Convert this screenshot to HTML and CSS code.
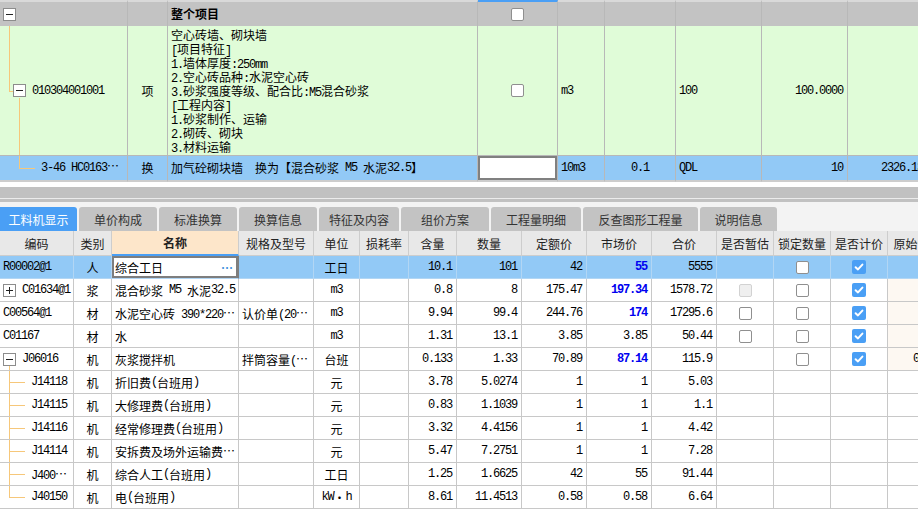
FILE: index.html
```html
<!DOCTYPE html>
<html lang="zh-CN">
<head>
<meta charset="utf-8">
<title>工料机显示</title>
<link rel="stylesheet" href="styles.css">
</head>
<body>
<div class="top">
  <div class="trow gray">
    <div class="tc code"><span class="bx minus"></span></div>
    <div class="tc"></div>
    <div class="tc name b">整个项目</div>
    <div class="tc ctr chk"><span class="cb"></span></div>
    <div class="tc"></div>
    <div class="tc"></div>
    <div class="tc"></div>
    <div class="tc"></div>
    <div class="tc"></div>
  </div>
  <div class="trow green">
    <div class="tc code"><span class="ln g-vup"></span><span class="ln g-hin"></span><span class="ln g-vdown"></span><span class="bx minus"></span><span class="m codetxt">010304001001</span></div>
    <div class="tc ctr">项</div>
    <div class="tc name multi">
      <div>空心砖墙、砌块墙</div>
      <div><span class="m">[</span>项目特征<span class="m">]</span></div>
      <div><span class="m">1.</span>墙体厚度<span class="m">:250mm</span></div>
      <div><span class="m">2.</span>空心砖品种<span class="m">:</span>水泥空心砖</div>
      <div><span class="m">3.</span>砂浆强度等级、配合比<span class="m">:M5</span>混合砂浆</div>
      <div><span class="m">[</span>工程内容<span class="m">]</span></div>
      <div><span class="m">1.</span>砂浆制作、运输</div>
      <div><span class="m">2.</span>砌砖、砌块</div>
      <div><span class="m">3.</span>材料运输</div>
    </div>
    <div class="tc ctr"><span class="cb"></span></div>
    <div class="tc m">m3</div>
    <div class="tc"></div>
    <div class="tc m">100</div>
    <div class="tc num">100.0000</div>
    <div class="tc"></div>
  </div>
  <div class="trow blue">
    <div class="tc code child"><span class="ln b-vup"></span><span class="ln b-h"></span><span class="m">3-46 HC0163⋯</span></div>
    <div class="tc ctr">换</div>
    <div class="tc name">加气砼砌块墙<span class="m">&nbsp;&nbsp;</span>换为【混合砂浆<span class="m">&nbsp;M5&nbsp;</span>水泥<span class="m">32.5</span>】</div>
    <div class="tc editcell"></div>
    <div class="tc m">10m3</div>
    <div class="tc ctr m">0.1</div>
    <div class="tc m">QDL</div>
    <div class="tc num">10</div>
    <div class="tc num">2326.13</div>
  </div>
</div>

<div class="split">
  <div class="sp-white"></div>
  <div class="sp-bar"></div>
  <div class="sp-hl"></div>
  <div class="sp-dl"></div>
</div>

<div class="tabbar">
  <div class="tab on w77">工料机显示</div>
  <div class="tab w78">单价构成</div>
  <div class="tab w78">标准换算</div>
  <div class="tab w78">换算信息</div>
  <div class="tab w80">特征及内容</div>
  <div class="tab w88">组价方案</div>
  <div class="tab w90">工程量明细</div>
  <div class="tab w115">反查图形工程量</div>
  <div class="tab w77">说明信息</div>
</div>

<div class="grid">
  <div class="grow ghead">
    <div class="g ctr">编码</div>
    <div class="g ctr">类别</div>
    <div class="g ctr hname">名称</div>
    <div class="g ctr">规格及型号</div>
    <div class="g ctr">单位</div>
    <div class="g ctr">损耗率</div>
    <div class="g ctr">含量</div>
    <div class="g ctr">数量</div>
    <div class="g ctr">定额价</div>
    <div class="g ctr">市场价</div>
    <div class="g ctr">合价</div>
    <div class="g ctr">是否暂估</div>
    <div class="g ctr">锁定数量</div>
    <div class="g ctr">是否计价</div>
    <div class="g ctr">原始含量</div>
  </div>

  <div class="grow sel">
    <div class="g m">R00002@1</div>
    <div class="g ctr">人</div>
    <div class="g name edit">综合工日<span class="more">⋯</span></div>
    <div class="g"></div>
    <div class="g ctr">工日</div>
    <div class="g"></div>
    <div class="g num">10.1</div>
    <div class="g num">101</div>
    <div class="g num">42</div>
    <div class="g num blue">55</div>
    <div class="g num">5555</div>
    <div class="g"></div>
    <div class="g ctr"><span class="cb"></span></div>
    <div class="g ctr"><span class="cb on"><svg viewBox="0 0 14 14" width="14" height="14"><path d="M3.6 7.2 L6 9.4 L10.4 4.6" fill="none" stroke="#fff" stroke-width="2" stroke-linecap="round" stroke-linejoin="round"/></svg></span></div>
    <div class="g"></div>
  </div>

  <div class="grow">
    <div class="g"><span class="bx plus"></span><span class="m codetxt2">C01634@1</span></div>
    <div class="g ctr">浆</div>
    <div class="g name">混合砂浆<span class="m">&nbsp;M5&nbsp;</span>水泥<span class="m">32.5</span></div>
    <div class="g"></div>
    <div class="g ctr m">m3</div>
    <div class="g"></div>
    <div class="g num">0.8</div>
    <div class="g num">8</div>
    <div class="g num">175.47</div>
    <div class="g num blue">197.34</div>
    <div class="g num">1578.72</div>
    <div class="g ctr"><span class="cb dis"></span></div>
    <div class="g ctr"><span class="cb"></span></div>
    <div class="g ctr"><span class="cb on"><svg viewBox="0 0 14 14" width="14" height="14"><path d="M3.6 7.2 L6 9.4 L10.4 4.6" fill="none" stroke="#fff" stroke-width="2" stroke-linecap="round" stroke-linejoin="round"/></svg></span></div>
    <div class="g peach"></div>
  </div>

  <div class="grow">
    <div class="g m">C00564@1</div>
    <div class="g ctr">材</div>
    <div class="g name">水泥空心砖<span class="m">&nbsp;390*220⋯</span></div>
    <div class="g name">认价单<span class="m">(20⋯</span></div>
    <div class="g ctr m">m3</div>
    <div class="g"></div>
    <div class="g num">9.94</div>
    <div class="g num">99.4</div>
    <div class="g num">244.76</div>
    <div class="g num blue">174</div>
    <div class="g num">17295.6</div>
    <div class="g ctr"><span class="cb"></span></div>
    <div class="g ctr"><span class="cb"></span></div>
    <div class="g ctr"><span class="cb on"><svg viewBox="0 0 14 14" width="14" height="14"><path d="M3.6 7.2 L6 9.4 L10.4 4.6" fill="none" stroke="#fff" stroke-width="2" stroke-linecap="round" stroke-linejoin="round"/></svg></span></div>
    <div class="g peach"></div>
  </div>

  <div class="grow">
    <div class="g m">C01167</div>
    <div class="g ctr">材</div>
    <div class="g name">水</div>
    <div class="g"></div>
    <div class="g ctr m">m3</div>
    <div class="g"></div>
    <div class="g num">1.31</div>
    <div class="g num">13.1</div>
    <div class="g num">3.85</div>
    <div class="g num">3.85</div>
    <div class="g num">50.44</div>
    <div class="g ctr"><span class="cb"></span></div>
    <div class="g ctr"><span class="cb"></span></div>
    <div class="g ctr"><span class="cb on"><svg viewBox="0 0 14 14" width="14" height="14"><path d="M3.6 7.2 L6 9.4 L10.4 4.6" fill="none" stroke="#fff" stroke-width="2" stroke-linecap="round" stroke-linejoin="round"/></svg></span></div>
    <div class="g peach"></div>
  </div>

  <div class="grow">
    <div class="g tstart"><span class="bx minus"></span><span class="m codetxt2">J06016</span></div>
    <div class="g ctr">机</div>
    <div class="g name">灰浆搅拌机</div>
    <div class="g name">拌筒容量<span class="m">(⋯</span></div>
    <div class="g ctr">台班</div>
    <div class="g"></div>
    <div class="g num">0.133</div>
    <div class="g num">1.33</div>
    <div class="g num">70.89</div>
    <div class="g num blue">87.14</div>
    <div class="g num">115.9</div>
    <div class="g"></div>
    <div class="g ctr"><span class="cb"></span></div>
    <div class="g ctr"><span class="cb on"><svg viewBox="0 0 14 14" width="14" height="14"><path d="M3.6 7.2 L6 9.4 L10.4 4.6" fill="none" stroke="#fff" stroke-width="2" stroke-linecap="round" stroke-linejoin="round"/></svg></span></div>
    <div class="g num peach">0.133</div>
  </div>

  <div class="grow">
    <div class="g tnode"><span class="m codetxt3">J14118</span></div>
    <div class="g ctr">机</div>
    <div class="g name">折旧费<span class="m">(</span>台班用<span class="m">)</span></div>
    <div class="g"></div>
    <div class="g ctr">元</div>
    <div class="g"></div>
    <div class="g num">3.78</div>
    <div class="g num">5.0274</div>
    <div class="g num">1</div>
    <div class="g num">1</div>
    <div class="g num">5.03</div>
    <div class="g"></div><div class="g"></div><div class="g"></div><div class="g"></div>
  </div>

  <div class="grow">
    <div class="g tnode"><span class="m codetxt3">J14115</span></div>
    <div class="g ctr">机</div>
    <div class="g name">大修理费<span class="m">(</span>台班用<span class="m">)</span></div>
    <div class="g"></div>
    <div class="g ctr">元</div>
    <div class="g"></div>
    <div class="g num">0.83</div>
    <div class="g num">1.1039</div>
    <div class="g num">1</div>
    <div class="g num">1</div>
    <div class="g num">1.1</div>
    <div class="g"></div><div class="g"></div><div class="g"></div><div class="g"></div>
  </div>

  <div class="grow">
    <div class="g tnode"><span class="m codetxt3">J14116</span></div>
    <div class="g ctr">机</div>
    <div class="g name">经常修理费<span class="m">(</span>台班用<span class="m">)</span></div>
    <div class="g"></div>
    <div class="g ctr">元</div>
    <div class="g"></div>
    <div class="g num">3.32</div>
    <div class="g num">4.4156</div>
    <div class="g num">1</div>
    <div class="g num">1</div>
    <div class="g num">4.42</div>
    <div class="g"></div><div class="g"></div><div class="g"></div><div class="g"></div>
  </div>

  <div class="grow">
    <div class="g tnode"><span class="m codetxt3">J14114</span></div>
    <div class="g ctr">机</div>
    <div class="g name">安拆费及场外运输费<span class="m">⋯</span></div>
    <div class="g"></div>
    <div class="g ctr">元</div>
    <div class="g"></div>
    <div class="g num">5.47</div>
    <div class="g num">7.2751</div>
    <div class="g num">1</div>
    <div class="g num">1</div>
    <div class="g num">7.28</div>
    <div class="g"></div><div class="g"></div><div class="g"></div><div class="g"></div>
  </div>

  <div class="grow">
    <div class="g tnode"><span class="m codetxt3">J400⋯</span></div>
    <div class="g ctr">机</div>
    <div class="g name">综合人工<span class="m">(</span>台班用<span class="m">)</span></div>
    <div class="g"></div>
    <div class="g ctr">工日</div>
    <div class="g"></div>
    <div class="g num">1.25</div>
    <div class="g num">1.6625</div>
    <div class="g num">42</div>
    <div class="g num">55</div>
    <div class="g num">91.44</div>
    <div class="g"></div><div class="g"></div><div class="g"></div><div class="g"></div>
  </div>

  <div class="grow">
    <div class="g tnode tlast"><span class="m codetxt3">J40150</span></div>
    <div class="g ctr">机</div>
    <div class="g name">电<span class="m">(</span>台班用<span class="m">)</span></div>
    <div class="g"></div>
    <div class="g ctr"><span class="m">kW</span>・<span class="m">h</span></div>
    <div class="g"></div>
    <div class="g num">8.61</div>
    <div class="g num">11.4513</div>
    <div class="g num">0.58</div>
    <div class="g num">0.58</div>
    <div class="g num">6.64</div>
    <div class="g"></div><div class="g"></div><div class="g"></div><div class="g"></div>
  </div>
</div>
</body>
</html>
```

FILE: styles.css
```css
* { box-sizing: border-box; }
html, body { margin: 0; padding: 0; }
body {
  width: 918px;
  height: 514px;
  overflow: hidden;
  background: #fff;
  font-family: "Noto Sans CJK SC", sans-serif;
  font-size: 12px;
  color: #000;
}
.m {
  font-family: "Liberation Mono", "Noto Sans CJK SC", monospace;
  letter-spacing: -1.2px;
}
.b { font-weight: bold; }

/* ---------- top (bill of quantities) ---------- */
.trow {
  display: grid;
  grid-template-columns: 128px 40px 310px 80px 47px 71px 86px 86px 80px;
  width: 928px;
}
.tc {
  position: relative;
  display: flex;
  align-items: center;
  padding: 0 3px;
  border-right: 1px solid #b8b8b8;
  white-space: nowrap;
  overflow: hidden;
  line-height: 14px;
}
.tc.ctr { justify-content: center; }
.tc.num {
  justify-content: flex-end;
  font-family: "Liberation Mono", monospace;
  letter-spacing: -1.2px;
  padding-right: 4px;
}
.trow.gray { height: 26px; background: #c3c3c3; }
.trow.gray .tc { border-top: 2px solid #d9d9d9; }
.trow.gray .tc.chk { border-top-color: #4a9ff5; }
.trow.green { height: 130px; background: #e0fcd8; }
.trow.green .tc { border-bottom: 1px solid #b8b8b8; }
.trow.blue { height: 26px; background: #92c9f6; }
.trow.blue .tc { border-bottom: 2px solid #cdcdcd; }

.tc.multi {
  display: block;
  padding-top: 2px;
  white-space: nowrap;
}
.tc.multi > div {
  height: 14px;
  line-height: 14px;
}
.green .code { padding-left: 13px; }
.codetxt { margin-left: 6px; }
.child { padding-left: 41px; }

.editcell {
  background: #fff;
  box-shadow: inset 0 0 0 2px #808080;
}

/* tree lines */
.ln { position: absolute; background: #f6c77a; }
.g-vup { left: 9px; top: 0; width: 1px; height: 50%; }
.g-hin { left: 9px; top: 50%; width: 4px; height: 1px; }
.g-vdown { left: 19px; top: calc(50% + 7px); bottom: -1px; width: 1px; }
.b-vup { left: 19px; top: 0; width: 1px; height: 50%; }
.b-h { left: 19px; top: 50%; width: 16px; height: 1px; }

/* expand boxes */
.bx {
  position: relative;
  flex: none;
  width: 13px;
  height: 13px;
  border: 1px solid #8c8c8c;
  background: #fff;
}
.bx::before {
  content: "";
  position: absolute;
  left: 2px;
  top: 5px;
  width: 7px;
  height: 1px;
  background: #222;
}
.bx.plus::after {
  content: "";
  position: absolute;
  left: 5px;
  top: 2px;
  width: 1px;
  height: 7px;
  background: #222;
}

/* checkboxes */
.cb {
  display: inline-block;
  width: 13px;
  height: 13px;
  border: 1px solid #8f8f8f;
  border-radius: 2px;
  background: #fff;
}
.cb.on {
  width: 14px;
  height: 14px;
  border: none;
  background: #4a9ff5;
}
.cb.on svg { display: block; }
.cb.dis { background: #efefef; border-color: #d2d2d2; }

/* ---------- splitter ---------- */
.sp-white { height: 5px; background: #fff; }
.sp-bar { height: 11px; background: #c1c1c1; }
.sp-hl { height: 1px; background: #ececec; }
.sp-dl { height: 3px; background: #c1c1c1; }

/* ---------- tabs ---------- */
.tabbar {
  height: 29px;
  background: #f3f3f3;
  display: flex;
  align-items: flex-end;
  gap: 2px;
}
.tab {
  flex: none;
  height: 24px;
  background: #c3c3c3;
  border-radius: 3px 3px 0 0;
  display: flex;
  align-items: center;
  justify-content: center;
  color: #333;
  font-size: 12px;
}
.tab.on { background: #4a9ff5; color: #fff; border-radius: 0 3px 0 0; }
.w77 { width: 77px; }
.w78 { width: 78px; }
.w80 { width: 80px; }
.w88 { width: 88px; }
.w90 { width: 90px; }
.w115 { width: 115px; }

/* ---------- resource grid ---------- */
.grow {
  display: grid;
  grid-template-columns: 74px 38px 127px 75px 46px 49px 48px 65px 65px 65px 65px 57px 57px 57px 60px;
  width: 948px;
  height: 23px;
}
.g {
  position: relative;
  display: flex;
  align-items: center;
  padding: 0 3px;
  border-right: 1px solid #c8c8c8;
  border-bottom: 1px solid #c8c8c8;
  white-space: nowrap;
  overflow: hidden;
}
.g.ctr { justify-content: center; }
.g.num {
  justify-content: flex-end;
  font-family: "Liberation Mono", monospace;
  letter-spacing: -1.2px;
  padding-right: 4px;
}
.g.num.blue { color: #0000f0; font-weight: bold; }
.g.peach { background: #fdf8f2; }

.ghead { height: 25px; background: #e8e8e8; color: #222; }
.ghead .g { border-color: #cdcdcd; }
.ghead .hname {
  background: #fde6ca;
  font-weight: bold;
  border-bottom: 2px solid #4a9ff5;
}

.grow.sel { background: #92c9f6; }
.grow.sel .g { border-color: #b2d6f4; }
.grow.sel .edit {
  background: #fff;
  box-shadow: inset 0 0 0 2px #7e7e7e;
  border-right-color: #7e7e7e;
}
.more {
  margin-left: auto;
  color: #3f8fdc;
  font-weight: bold;
  padding-right: 2px;
}

.codetxt2 { margin-left: 6px; }
.codetxt3 { margin-left: 28px; }

.tstart::before {
  content: "";
  position: absolute;
  left: 9px;
  top: calc(50% + 7px);
  bottom: -1px;
  width: 1px;
  background: #f6c77a;
}
.tnode::before {
  content: "";
  position: absolute;
  left: 9px;
  top: 0;
  bottom: -1px;
  width: 1px;
  background: #f6c77a;
}
.tnode.tlast::before { bottom: auto; height: 50%; }
.tnode::after {
  content: "";
  position: absolute;
  left: 9px;
  top: 50%;
  width: 16px;
  height: 1px;
  background: #f6c77a;
}
```
